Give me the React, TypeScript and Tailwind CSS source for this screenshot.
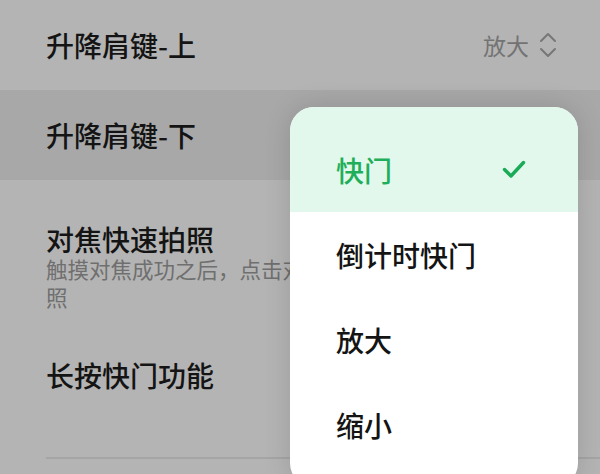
import React from "react";

const options = ["快门", "倒计时快门", "放大", "缩小"];

const UpDownIcon = () => (
  <svg width="18" height="26" viewBox="0 0 18 26" fill="none">
    <path d="M2 9 L9 2 L16 9" stroke="#777777" strokeWidth="2" strokeLinecap="round" strokeLinejoin="round" />
    <path d="M2 17 L9 24 L16 17" stroke="#777777" strokeWidth="2" strokeLinecap="round" strokeLinejoin="round" />
  </svg>
);

const CheckIcon = () => (
  <svg width="24" height="19" viewBox="0 0 24 19" fill="none">
    <path d="M2.5 9.5 L9 16 L21.5 2.5" stroke="#19ab57" strokeWidth="3.4" strokeLinecap="round" strokeLinejoin="round" />
  </svg>
);

const App = () => {
  const selected = "快门";

  return (
    <div className="relative h-[474px] w-[600px] overflow-hidden bg-[#b4b4b4] font-['Noto_Sans_CJK_SC','Noto_Sans',sans-serif] text-[#141414]">
      {/* settings list (dimmed) */}
      <div className="flex h-[90px] items-center justify-between pl-[46px] pr-[43px]">
        <div className="text-[28px] font-medium leading-[30px]">升降肩键-上</div>
        <div className="flex items-center gap-[10px]">
          <span className="text-[23px] leading-[30px] text-[#737373]">放大</span>
          <UpDownIcon />
        </div>
      </div>
      <div className="flex h-[90px] items-center bg-[#a8a8a8] pl-[46px]">
        <div className="text-[28px] font-medium leading-[30px]">升降肩键-下</div>
      </div>
      <div className="flex h-[135px] flex-col pl-[46px] pr-[46px] pt-[44px]">
        <div className="text-[28px] font-medium leading-[30px]">对焦快速拍照</div>
        <div className="mt-[1px] text-[21.5px] leading-[28px] text-[#6f6f6f]">
          触摸对焦成功之后，点击对焦框以外区域即可快速拍照
        </div>
      </div>
      <div className="flex h-[142px] flex-col pl-[46px] pt-[45px]">
        <div className="text-[28px] font-medium leading-[30px]">长按快门功能</div>
      </div>
      <div className="ml-[46px] h-[2px] bg-[#a5a5a5]" />

      {/* dropdown menu */}
      <div className="absolute left-[290px] top-[107px] w-[288px] overflow-hidden rounded-[24px] bg-white pb-[20px] shadow-[0_0_28px_rgba(0,0,0,0.14)]">
        {options.map((opt, i) => {
          const active = opt === selected;
          return (
            <div
              key={opt}
              className={
                i === 0
                  ? "flex h-[105px] items-center justify-between pl-[46px] pr-[52px] pt-[20px] " +
                    (active ? "bg-[#e2f8ec]" : "")
                  : "flex h-[85px] items-center justify-between pl-[46px] pr-[52px] " +
                    (active ? "bg-[#e2f8ec]" : "")
              }
            >
              <span
                className={
                  active
                    ? "text-[28px] font-medium leading-[30px] text-[#1fae5a]"
                    : "text-[28px] font-medium leading-[30px] text-[#141414]"
                }
              >
                {opt}
              </span>
              {active && <CheckIcon />}
            </div>
          );
        })}
      </div>
    </div>
  );
};

export default App;
